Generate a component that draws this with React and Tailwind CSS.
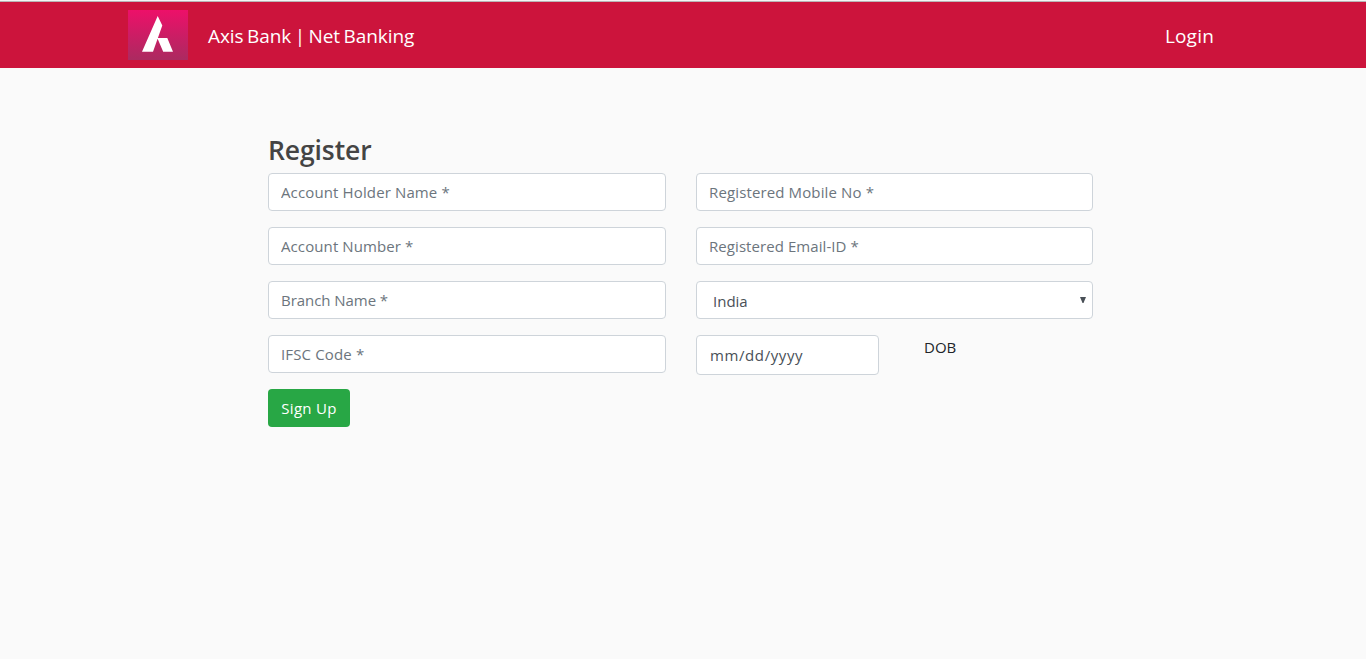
const fieldBase =
  "block h-[38px] w-full rounded border border-[#ced4da] bg-white px-3 text-[15px] text-[#495057] outline-none placeholder:text-[#6c757d] placeholder:opacity-100";

function Field({ placeholder, className }) {
  return <input type="text" placeholder={placeholder} className={`${fieldBase} ${className}`} />;
}

function Logo() {
  return (
    <svg width="60" height="50" viewBox="0 0 60 50" className="block shrink-0" aria-hidden="true">
      <defs>
        <linearGradient id="logo-bg" x1="0" y1="0" x2="0" y2="1">
          <stop offset="0" stopColor="#ed1069" />
          <stop offset="1" stopColor="#ab2a60" />
        </linearGradient>
      </defs>
      <rect width="60" height="50" fill="url(#logo-bg)" />
      <path d="M29.7 6 L34.3 15.5 L25 41.7 L14 41.7 Z M29.3 28 L39.3 28 L45 41.7 L35.2 41.7 Z" fill="#fff" />
    </svg>
  );
}

export default function App() {
  return (
    <div className="min-h-[659px] bg-[#fafafa] font-['Open_Sans','Noto_Sans',sans-serif] text-[#212529]">
      <div className="h-px bg-[#f5f5f5]" />
      <div className="h-px bg-[#b9b5b6]" />
      <header className="h-[66px] bg-[#cc143c]">
        <div className="flex h-full items-start justify-between pl-32 pr-[152px] text-white">
          <a className="flex items-start pt-2">
            <Logo />
            <span className="ml-5 pt-[11px] text-[19px] leading-[30px] tracking-[-0.05px] [word-spacing:-1.5px]">
              Axis Bank | Net Banking
            </span>
          </a>
          <a className="pt-[19px] text-[19px] leading-[30px] tracking-[0.2px]">Login</a>
        </div>
      </header>
      <main className="ml-[268px] w-[825px] pt-[66px]">
        <h3 className="mb-1.5 text-[26.5px] font-semibold leading-[33px] tracking-[-0.1px] text-[#444]">Register</h3>
        <form className="grid grid-cols-[398px_397px] items-start gap-x-[30px]">
          <div className="flex flex-col items-start gap-4">
            <Field placeholder="Account Holder Name *" className="tracking-[0.13px]" />
            <Field placeholder="Account Number *" className="tracking-[0.1px]" />
            <Field placeholder="Branch Name *" className="tracking-[-0.05px]" />
            <Field placeholder="IFSC Code *" className="tracking-[0.15px]" />
            <button type="button" className="h-[38px] w-[82px] rounded bg-[#28a745] text-[15px] tracking-[0.3px] text-white">
              Sign Up
            </button>
          </div>
          <div className="flex flex-col gap-4">
            <Field placeholder="Registered Mobile No *" className="tracking-[0.13px]" />
            <Field placeholder="Registered Email-ID *" className="tracking-[0.07px]" />
            <div className="flex h-[38px] items-center justify-between rounded border border-[#ced4da] bg-white pl-4 pr-[6px] text-[15px] text-[#495057]">
              <span className="pt-[2px]">India</span>
              <svg width="6" height="6" viewBox="0 0 6 6" aria-hidden="true">
                <path d="M0 0 H6 L3.5 6 H2.5 Z" fill="#495057" />
              </svg>
            </div>
            <div className="flex items-start">
              <div className="w-[183px]">
                <input
                  type="text"
                  placeholder="mm/dd/yyyy"
                  className="block h-10 w-full rounded border border-[#ced4da] bg-white pl-[13px] text-[15px] tracking-[0.6px] outline-none placeholder:text-[#495057] placeholder:opacity-100"
                />
              </div>
              <label className="ml-[45px] text-[15px] leading-6">DOB</label>
            </div>
          </div>
        </form>
      </main>
    </div>
  );
}
